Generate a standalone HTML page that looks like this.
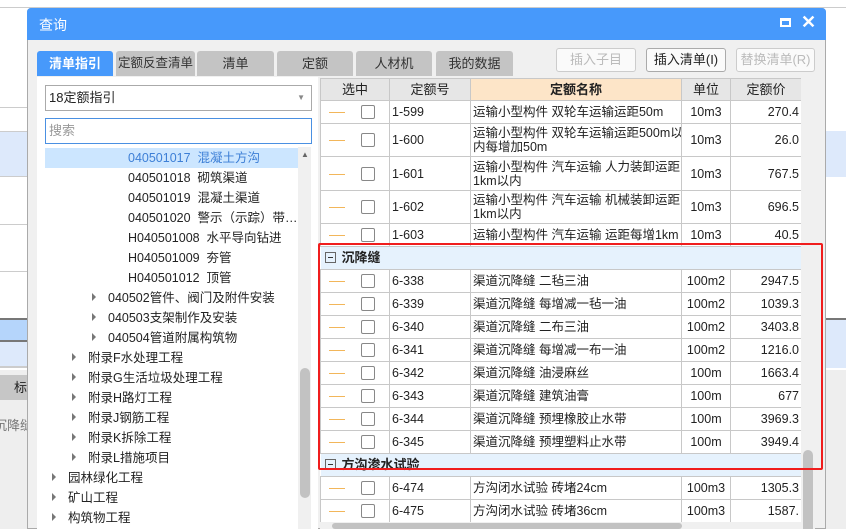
<!DOCTYPE html><html><head><meta charset="utf-8"><style>
*{margin:0;padding:0;box-sizing:border-box}
body{width:846px;height:529px;overflow:hidden;position:relative;background:#fff;font-family:"Liberation Sans","Noto Sans CJK SC",sans-serif;font-size:12px;color:#222}
.a{position:absolute}
.tab{position:absolute;top:51px;height:25px;background:#c4c4c4;border-radius:3px 3px 0 0;text-align:center;line-height:25px;font-size:13px;color:#333;white-space:nowrap;overflow:hidden}
.btn{position:absolute;top:48px;height:24px;border:1px solid #ccc;border-radius:3px;background:#fafafa;text-align:center;line-height:22px;font-size:13px;color:#bbb}
.tr{position:absolute;left:0;height:20px;line-height:20px;font-size:12.5px;white-space:nowrap}
.ar{display:inline-block;width:0;height:0;border-left:4px solid #777;border-top:4px solid transparent;border-bottom:4px solid transparent;margin-right:12px;vertical-align:1px}
table{border-collapse:collapse;table-layout:fixed;position:absolute;left:320px;top:78px;width:481px}
td{border:1px solid #c8c8c8;font-size:12.5px;padding:0 2px;overflow:hidden;white-space:nowrap;height:23px;line-height:14px}
.h td{background:#e6e6e6;text-align:center;font-size:13px;height:22px}
.h td.n{background:#fde5c8;font-weight:bold}
.ck{position:relative}
.ck i{position:absolute;left:8px;top:50%;width:16px;border-top:1px solid #f2b65a}
.ck b{position:absolute;left:40px;top:50%;margin-top:-7px;width:14px;height:14px;border:1px solid #888;border-radius:2px;background:#fff}
.c{text-align:center}.r{text-align:right}
.g td{background:#e6f2fd;font-weight:bold;font-size:13px;border-left:none;border-right:none}
.g span{display:inline-block;width:11px;height:11px;border:1px solid #666;margin:0 6px 0 2px;vertical-align:-1px;position:relative}
.g span:after{content:"";position:absolute;left:2px;right:2px;top:4px;border-top:1px solid #333}
</style></head><body>
<div class="a" style="left:0;top:0;width:846px;height:8px;border-bottom:1px solid #ccc"></div>
<div class="a" style="left:0;top:131px;width:27px;height:46px;background:#dde9fb;border-top:1px solid #ccc;border-bottom:1px solid #ccc"></div>
<div class="a" style="left:0;top:107px;width:27px;border-top:1px solid #ccc"></div>
<div class="a" style="left:0;top:224px;width:27px;border-top:1px solid #ccc"></div>
<div class="a" style="left:0;top:271px;width:27px;border-top:1px solid #ccc"></div>
<div class="a" style="left:0;top:318px;width:27px;height:24px;background:#b5d5fb;border-top:2px solid #777;border-bottom:2px solid #777"></div>
<div class="a" style="left:0;top:342px;width:27px;height:26px;background:#dde9fb;border-bottom:2px solid #ccc"></div>
<div class="a" style="left:0;top:370px;width:27px;height:159px;background:#eee"></div>
<div class="a" style="left:0;top:375px;width:27px;height:25px;background:#c6c6c6;font-size:13px;line-height:25px;text-align:right">标</div>
<div class="a" style="left:-6px;top:415px;font-size:13px;color:#777">沉降缝</div>
<div class="a" style="left:825px;top:131px;width:21px;height:46px;background:#dde9fb"></div>
<div class="a" style="left:825px;top:318px;width:21px;height:50px;background:#dde9fb;border-top:2px solid #777"></div>
<div class="a" style="left:825px;top:370px;width:21px;height:159px;background:#eee"></div>
<div class="a" style="left:27px;top:8px;width:799px;height:521px;background:#f0f0f0;border:1px solid #aaa;border-radius:4px 4px 0 0"></div>
<div class="a" style="left:27px;top:8px;width:799px;height:32px;background:#4799fb;border-radius:4px 4px 0 0;color:#fff;font-size:14px;line-height:34px;padding-left:12px">查询</div>
<div class="a" style="left:780px;top:18px;width:11px;height:9px;border:2px solid #fff;border-top-width:3px"></div>
<div class="a" style="left:801px;top:12px;color:#fff;font-size:18px;font-weight:bold">✕</div>
<div class="tab" style="left:37px;width:76px;background:#4799fb;color:#fff;font-weight:bold">清单指引</div>
<div class="tab" style="left:116px;width:79px;font-size:12.5px">定额反查清单</div>
<div class="tab" style="left:197px;width:77px">清单</div>
<div class="tab" style="left:277px;width:76px">定额</div>
<div class="tab" style="left:356px;width:76px">人材机</div>
<div class="tab" style="left:436px;width:77px">我的数据</div>
<div class="btn" style="left:556px;width:80px">插入子目</div>
<div class="btn" style="left:646px;width:80px;color:#222;border-color:#aaa">插入清单(I)</div>
<div class="btn" style="left:736px;width:79px">替换清单(R)</div>
<div class="a" style="left:37px;top:77px;width:281px;height:452px;background:#fff"></div>
<div class="a" style="left:45px;top:85px;width:267px;height:26px;border:1px solid #aaa;line-height:24px;padding-left:3px;font-size:13px">18定额指引<span style="position:absolute;right:6px;top:0;color:#888;font-size:8px">▼</span></div>
<div class="a" style="left:45px;top:118px;width:267px;height:26px;border:1px solid #4a90e2;line-height:24px;padding-left:3px;font-size:13px;color:#999">搜索</div>
<div class="a" style="left:298px;top:147px;width:13px;height:382px;background:#f0f0f0"></div>
<div class="a" style="left:300px;top:368px;width:10px;height:130px;background:#c2c2c2;border-radius:5px"></div>
<div class="a" style="left:301px;top:150px;font-size:8px;color:#666">▲</div>
<div class="a" style="left:45px;top:147px;width:253px;height:382px;overflow:hidden">
<div class="tr" style="top:1px;width:253px;background:#cce6ff;color:#3d7fd6;padding-left:83px">040501017&nbsp; 混凝土方沟</div>
<div class="tr" style="top:21px;padding-left:83px">040501018&nbsp; 砌筑渠道</div>
<div class="tr" style="top:41px;padding-left:83px">040501019&nbsp; 混凝土渠道</div>
<div class="tr" style="top:61px;padding-left:83px">040501020&nbsp; 警示（示踪）带…</div>
<div class="tr" style="top:81px;padding-left:83px">H040501008&nbsp; 水平导向钻进</div>
<div class="tr" style="top:101px;padding-left:83px">H040501009&nbsp; 夯管</div>
<div class="tr" style="top:121px;padding-left:83px">H040501012&nbsp; 顶管</div>
<div class="tr" style="top:141px;padding-left:47px"><span class="ar"></span>040502管件、阀门及附件安装</div>
<div class="tr" style="top:161px;padding-left:47px"><span class="ar"></span>040503支架制作及安装</div>
<div class="tr" style="top:181px;padding-left:47px"><span class="ar"></span>040504管道附属构筑物</div>
<div class="tr" style="top:201px;padding-left:27px"><span class="ar"></span>附录F水处理工程</div>
<div class="tr" style="top:221px;padding-left:27px"><span class="ar"></span>附录G生活垃圾处理工程</div>
<div class="tr" style="top:241px;padding-left:27px"><span class="ar"></span>附录H路灯工程</div>
<div class="tr" style="top:261px;padding-left:27px"><span class="ar"></span>附录J钢筋工程</div>
<div class="tr" style="top:281px;padding-left:27px"><span class="ar"></span>附录K拆除工程</div>
<div class="tr" style="top:301px;padding-left:27px"><span class="ar"></span>附录L措施项目</div>
<div class="tr" style="top:321px;padding-left:7px"><span class="ar"></span>园林绿化工程</div>
<div class="tr" style="top:341px;padding-left:7px"><span class="ar"></span>矿山工程</div>
<div class="tr" style="top:361px;padding-left:7px"><span class="ar"></span>构筑物工程</div>
</div>
<div class="a" style="left:320px;top:78px;width:495px;height:451px;background:#fff;overflow:hidden">
<table style="left:0;top:0">
<colgroup><col style="width:69px"><col style="width:81px"><col style="width:211px"><col style="width:49px"><col style="width:71px"></colgroup>
<tr class="h"><td>选中</td><td>定额号</td><td class="n">定额名称</td><td>单位</td><td>定额价</td></tr>
<tr><td class="ck"><i></i><b></b></td><td>1-599</td><td>运输小型构件 双轮车运输运距50m</td><td class="c">10m3</td><td class="r">270.4</td></tr>
<tr style="height:33px"><td class="ck"><i></i><b></b></td><td>1-600</td><td>运输小型构件 双轮车运输运距500m以<br>内每增加50m</td><td class="c">10m3</td><td class="r">26.0</td></tr>
<tr style="height:34px"><td class="ck"><i></i><b></b></td><td>1-601</td><td>运输小型构件 汽车运输 人力装卸运距<br>1km以内</td><td class="c">10m3</td><td class="r">767.5</td></tr>
<tr style="height:33px"><td class="ck"><i></i><b></b></td><td>1-602</td><td>运输小型构件 汽车运输 机械装卸运距<br>1km以内</td><td class="c">10m3</td><td class="r">696.5</td></tr>
<tr><td class="ck"><i></i><b></b></td><td>1-603</td><td>运输小型构件 汽车运输 运距每增1km</td><td class="c">10m3</td><td class="r">40.5</td></tr>
<tr class="g"><td colspan="5"><span></span>沉降缝</td></tr>
<tr><td class="ck"><i></i><b></b></td><td>6-338</td><td>渠道沉降缝 二毡三油</td><td class="c">100m2</td><td class="r">2947.5</td></tr>
<tr><td class="ck"><i></i><b></b></td><td>6-339</td><td>渠道沉降缝 每增减一毡一油</td><td class="c">100m2</td><td class="r">1039.3</td></tr>
<tr><td class="ck"><i></i><b></b></td><td>6-340</td><td>渠道沉降缝 二布三油</td><td class="c">100m2</td><td class="r">3403.8</td></tr>
<tr><td class="ck"><i></i><b></b></td><td>6-341</td><td>渠道沉降缝 每增减一布一油</td><td class="c">100m2</td><td class="r">1216.0</td></tr>
<tr><td class="ck"><i></i><b></b></td><td>6-342</td><td>渠道沉降缝 油浸麻丝</td><td class="c">100m</td><td class="r">1663.4</td></tr>
<tr><td class="ck"><i></i><b></b></td><td>6-343</td><td>渠道沉降缝 建筑油膏</td><td class="c">100m</td><td class="r">677</td></tr>
<tr><td class="ck"><i></i><b></b></td><td>6-344</td><td>渠道沉降缝 预埋橡胶止水带</td><td class="c">100m</td><td class="r">3969.3</td></tr>
<tr><td class="ck"><i></i><b></b></td><td>6-345</td><td>渠道沉降缝 预埋塑料止水带</td><td class="c">100m</td><td class="r">3949.4</td></tr>
<tr class="g"><td colspan="5"><span></span>方沟渗水试验</td></tr>
<tr><td class="ck"><i></i><b></b></td><td>6-474</td><td>方沟闭水试验 砖堵24cm</td><td class="c">100m3</td><td class="r">1305.3</td></tr>
<tr><td class="ck"><i></i><b></b></td><td>6-475</td><td>方沟闭水试验 砖堵36cm</td><td class="c">100m3</td><td class="r">1587.</td></tr>
</table>
<div class="a" style="left:481px;top:0;width:14px;height:451px;background:#f0f0f0"></div>
<div class="a" style="left:483px;top:372px;width:10px;height:96px;background:#c2c2c2;border-radius:5px"></div>
<div class="a" style="left:0;top:444px;width:481px;height:7px;background:#f0f0f0"></div>
<div class="a" style="left:12px;top:445px;width:350px;height:6px;background:#c2c2c2;border-radius:3px"></div>
</div>
<div class="a" style="left:318px;top:243px;width:505px;height:227px;border:2px solid #f01d1d;border-radius:2px"></div>
</body></html>
